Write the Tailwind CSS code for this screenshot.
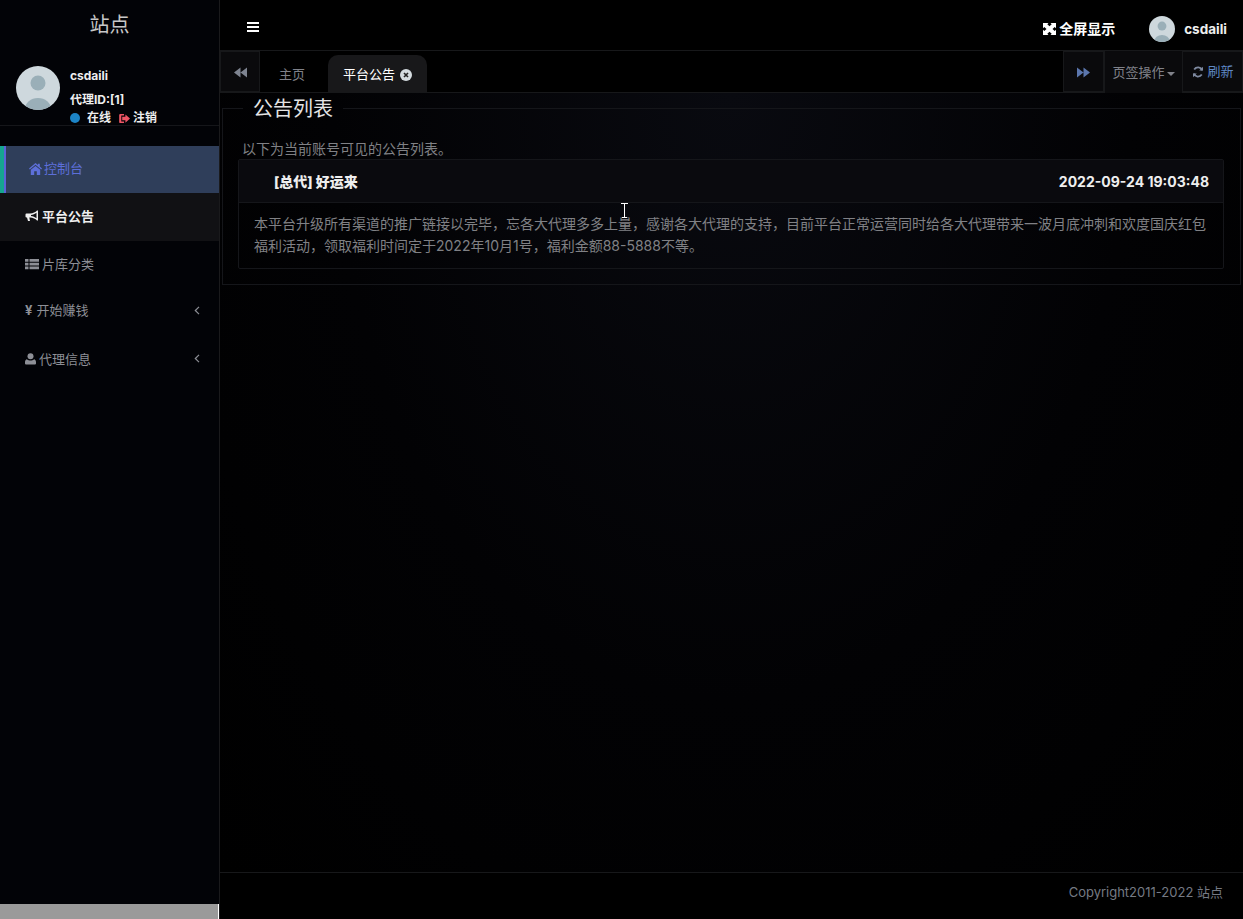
<!DOCTYPE html>
<html lang="zh-CN">
<head>
<meta charset="utf-8">
<title>公告列表</title>
<script src="https://cdn.jsdelivr.net/npm/@tailwindcss/browser@4"></script>
</head>
<body class="bg-black overflow-hidden font-['Inter','Noto_Sans_CJK_SC',sans-serif]">
<div class="relative flex h-[919px] w-[1243px] overflow-hidden">
  <aside class="flex h-full w-[220px] shrink-0 flex-col border-r border-[#1a1a1c] bg-[#020307]">
    <div class="h-[50px] pt-[11px] text-center text-[20px] leading-[28px] text-[#c8c8c8]">站点</div>
    <div class="flex h-[76px] border-b border-[#15161a] pl-4 pt-4">
      <svg class="h-11 w-11 shrink-0" viewBox="0 0 44 44"><clipPath id="a1"><circle cx="22" cy="22" r="22"/></clipPath><circle cx="22" cy="22" r="22" fill="#ced8dd"/><g clip-path="url(#a1)" fill="#9aafb8"><circle cx="22" cy="17" r="7.5"/><ellipse cx="22" cy="43" rx="13" ry="11"/></g></svg>
      <div class="ml-[10px] text-[12px] font-bold leading-[18px] text-[#eee]">
        <div class="mt-[1px]">csdaili</div>
        <div class="mt-[6px]">代理ID:[1]</div>
        <div class="flex items-center">
          <span class="h-[10px] w-[10px] rounded-full bg-[#1c84c6]"></span>
          <span class="ml-[7px]">在线</span>
          <svg class="ml-2 h-[11px] w-[11px]" viewBox="0 0 12 12" fill="#ed5565"><path d="M1.500 1h4v1.800H2.500v6.400h3V11h-4a1.300 1.300 0 0 1-1.300-1.300V2.300A1.300 1.300 0 0 1 1.500 1z"/><path d="M7 1.500 12 6 7 10.500V8H3.500V4H7z"/></svg>
          <span class="ml-[3px]">注销</span>
        </div>
      </div>
    </div>
    <nav class="mt-5 text-[13px] leading-[18px] text-[#8d8f96]">
      <a class="flex h-[47px] items-center border-l-[4px] border-[#16a58f] bg-[#2f3e5a] text-[#5d6fd8]">
        <span class="flex h-full w-[2px] bg-[#5a63d6]"></span>
        <svg class="ml-[23px] -mt-[2px] h-[12px] w-[13px]" viewBox="0 0 13 12" fill="currentColor"><path d="M6.500 0 0 5.400l.8 1L6.500 1.700l5.700 4.700.8-1L10.800 3.600V.8H9v1.300zM1.800 6.800V12H5.200V8.300h2.600V12h3.400V6.800L6.500 2.900z"/></svg>
        <span class="ml-[2px] -mt-[4px]">控制台</span>
      </a>
      <a class="flex h-[48px] items-center bg-[#111114] pl-[25px] pb-[2px] font-bold text-[#eee]">
        <svg class="h-3 w-[14px]" viewBox="0 0 14 12" fill="currentColor"><path d="M13 .5h-1C10.500 2.300 8 3.300 5 3.500H1.500A1 1 0 0 0 .5 4.500v2a1 1 0 0 0 1 1H2l1 3.500h2L4.300 7.500H5c3 .2 5.500 1.200 7 3h1zM11.500 2.800v5.400C10 7 8 6.200 6 6V5c2-.2 4-1 5.500-2.200z"/></svg>
        <span class="ml-[3px]">平台公告</span>
      </a>
      <a class="flex h-[47.500px] items-center pl-[25px] pb-[2px]">
        <svg class="h-3 w-[14px]" viewBox="0 0 14 12" fill="currentColor"><path d="M0 1h3.500v2.800H0zM4.500 1H14v2.800H4.500zM0 4.700h3.500v2.800H0zM4.500 4.700H14v2.800H4.500zM0 8.400h3.500v2.800H0zM4.500 8.400H14v2.800H4.500z"/></svg>
        <span class="ml-[3px]">片库分类</span>
      </a>
      <a class="flex h-[47.500px] items-center pl-[25px] pr-[19px] pb-[4px]">
        <span class="text-[13px] font-bold">¥</span>
        <span class="ml-[4px]">开始赚钱</span>
        <svg class="ml-auto h-[9px] w-[6px]" viewBox="0 0 6 9" fill="none" stroke="currentColor" stroke-width="1.200"><path d="M5 .8 1.300 4.500 5 8.200"/></svg>
      </a>
      <a class="flex h-[47.500px] items-center pl-[25px] pr-[19px] pb-[2px]">
        <svg class="h-3 w-[11px]" viewBox="0 0 11 12" fill="currentColor"><circle cx="5.500" cy="3.300" r="3"/><path d="M2 6.200c1 1 2.300 1.400 3.500 1.400S8 7.200 9 6.200c1.200.2 2 1.200 2 3V10.500a1 1 0 0 1-1 1H1a1 1 0 0 1-1-1V9.200c0-1.800.8-2.800 2-3z"/></svg>
        <span class="ml-[3px]">代理信息</span>
        <svg class="ml-auto h-[9px] w-[6px]" viewBox="0 0 6 9" fill="none" stroke="currentColor" stroke-width="1.200"><path d="M5 .8 1.300 4.500 5 8.200"/></svg>
      </a>
    </nav>
    <div class="mt-auto h-[15px] w-[219px] border-r border-white bg-[#9a9a9a]"></div>
  </aside>
  <main class="flex h-full min-w-0 flex-1 flex-col bg-black">
    <header class="flex h-[51px] shrink-0 items-center border-b border-[#17181a] pl-[27px] pr-4 pt-[8px]">
      <svg class="-mt-[4px] h-3 w-3" viewBox="0 0 12 12" fill="#fff"><path d="M0 1h12v2H0zM0 5h12v2H0zM0 9h12v2H0z"/></svg>
      <svg class="ml-auto h-3 w-[13px]" viewBox="0 0 13 12" fill="#fff"><path d="M0 0h5.500L4.300 1.300 6.500 3.300 8.700 1.300 7.500 0H13v5.200l-1.300-1.200L9.500 6l2.200 2 1.300-1.200V12H7.500l1.200-1.300-2.200-2-2.200 2L5.500 12H0V6.800L1.300 8 3.500 6 1.300 4 0 5.200z"/></svg>
      <span class="-mt-[2px] ml-[3px] text-[14px] font-bold text-white">全屏显示</span>
      <svg class="ml-[34px] h-[26px] w-[26px]" viewBox="0 0 44 44"><clipPath id="a2"><circle cx="22" cy="22" r="22"/></clipPath><circle cx="22" cy="22" r="22" fill="#ced8dd"/><g clip-path="url(#a2)" fill="#9aafb8"><circle cx="22" cy="17" r="7.500"/><ellipse cx="22" cy="43" rx="13" ry="11"/></g></svg>
      <span class="ml-[9px] text-[13.500px] font-bold text-[#eee]">csdaili</span>
    </header>
    <div class="flex h-[42px] shrink-0 border-b border-[#17181a]">
      <button class="flex h-[41px] w-[40px] items-center justify-center border border-[#17181a] bg-[#0a0a0c] text-[#7e8490]">
        <svg class="mt-[2px] h-[11px] w-[13px]" viewBox="0 0 13 11" fill="currentColor"><path d="M6.500.5v10L0 5.500zM13 .5v10L6.500 5.500z"/></svg>
      </button>
      <div class="flex items-end">
        <span class="flex h-[37px] w-[64px] items-center justify-center pt-[2px] text-[13px] text-[#80828a]">主页</span>
        <span class="ml-[4px] flex h-[37px] w-[99px] items-center justify-center rounded-t-[10px] bg-[#18181a] pt-[2px] text-[13px] text-white">平台公告
          <svg class="ml-[5px] h-3 w-3" viewBox="0 0 12 12"><circle cx="6" cy="6" r="6" fill="#d5dce0"/><path d="M4 4l4 4M8 4l-4 4" stroke="#222" stroke-width="1.600"/></svg>
        </span>
      </div>
      <button class="ml-auto flex h-[41px] w-[41px] items-center justify-center border border-[#17181a] bg-[#0a0a0c] text-[#5b76ad]">
        <svg class="mt-[2px] h-[11px] w-[13px]" viewBox="0 0 13 11" fill="currentColor"><path d="M0 .5v10l6.500-5zM6.500 .5v10l6.500-5z"/></svg>
      </button>
      <button class="flex h-[42px] w-[79px] items-center justify-center border-x border-[#17181a] bg-[#0a0a0c] pt-[2px] text-[13px] text-[#80828a]">页签操作<span class="ml-[2px] mt-[1px] h-0 w-0 border-x-[4px] border-t-[4px] border-x-transparent border-t-[#80828a]"></span></button>
      <button class="flex h-[41px] w-[60px] items-center justify-center border-y border-r border-[#17181a] bg-[#0a0a0c] pl-[1px] text-[13px] text-[#5f88c4]">
        <svg class="h-3 w-3 text-[#7f8aa0]" viewBox="0 0 12 12" fill="none" stroke="currentColor" stroke-width="1.800"><path d="M10.400 4.300A4.700 4.700 0 0 0 2.200 3.500M1.600 7.700a4.700 4.700 0 0 0 8.200.8"/><path d="M11 .8v3.800H7.200zM1 11.200V7.400h3.800z" fill="currentColor" stroke="none"/></svg>
        <span class="ml-[3px]">刷新</span>
      </button>
    </div>
    <div class="flex-1 bg-[radial-gradient(ellipse_at_50%_0%,#090a10_0%,#020204_55%,#000_100%)] px-[2px]">
      <fieldset class="h-[192px] border border-[#15161a] px-5">
        <legend class="px-[10px] pt-[2px] text-[20px] leading-[28px] text-[#e4e4e4]">公告列表</legend>
        <p class="-ml-[1px] mt-[17px] text-[14px] leading-[18px] text-[#808185]">以下为当前账号可见的公告列表。</p>
        <section class="-ml-[5px] -mr-[4px] mt-[1px] h-[110px] rounded-[2px] border border-[#15161a]">
          <div class="flex h-[43px] items-center justify-between border-b border-[#15161a] bg-[#0a0a0e] pl-[35px] pr-[14px] text-[14px] font-bold text-[#eee]">
            <span class="font-extrabold">[总代] 好运来</span>
            <span>2022-09-24 19:03:48</span>
          </div>
          <p class="px-[15px] pt-[10px] text-[14px] leading-[22px] text-[#808185]">本平台升级所有渠道的推广链接以完毕，忘各大代理多多上量，感谢各大代理的支持，目前平台正常运营同时给各大代理带来一波月底冲刺和欢度国庆红包福利活动，领取福利时间定于2022年10月1号，福利金额88-5888不等。</p>
        </section>
      </fieldset>
    </div>
    <footer class="flex h-[47px] shrink-0 items-center justify-end border-t border-[#17181a] pb-[6px] pr-5 text-[13px] text-[#757a84]">Copyright2011-2022 站点</footer>
  </main>
  <svg class="absolute left-[620px] top-[203px] h-[15px] w-[9px]" viewBox="0 0 9 15" fill="none" stroke="#fff"><path d="M1 .5h7M4.500.5v14M2 14.500h5"/></svg>
</div>
</body>
</html>
